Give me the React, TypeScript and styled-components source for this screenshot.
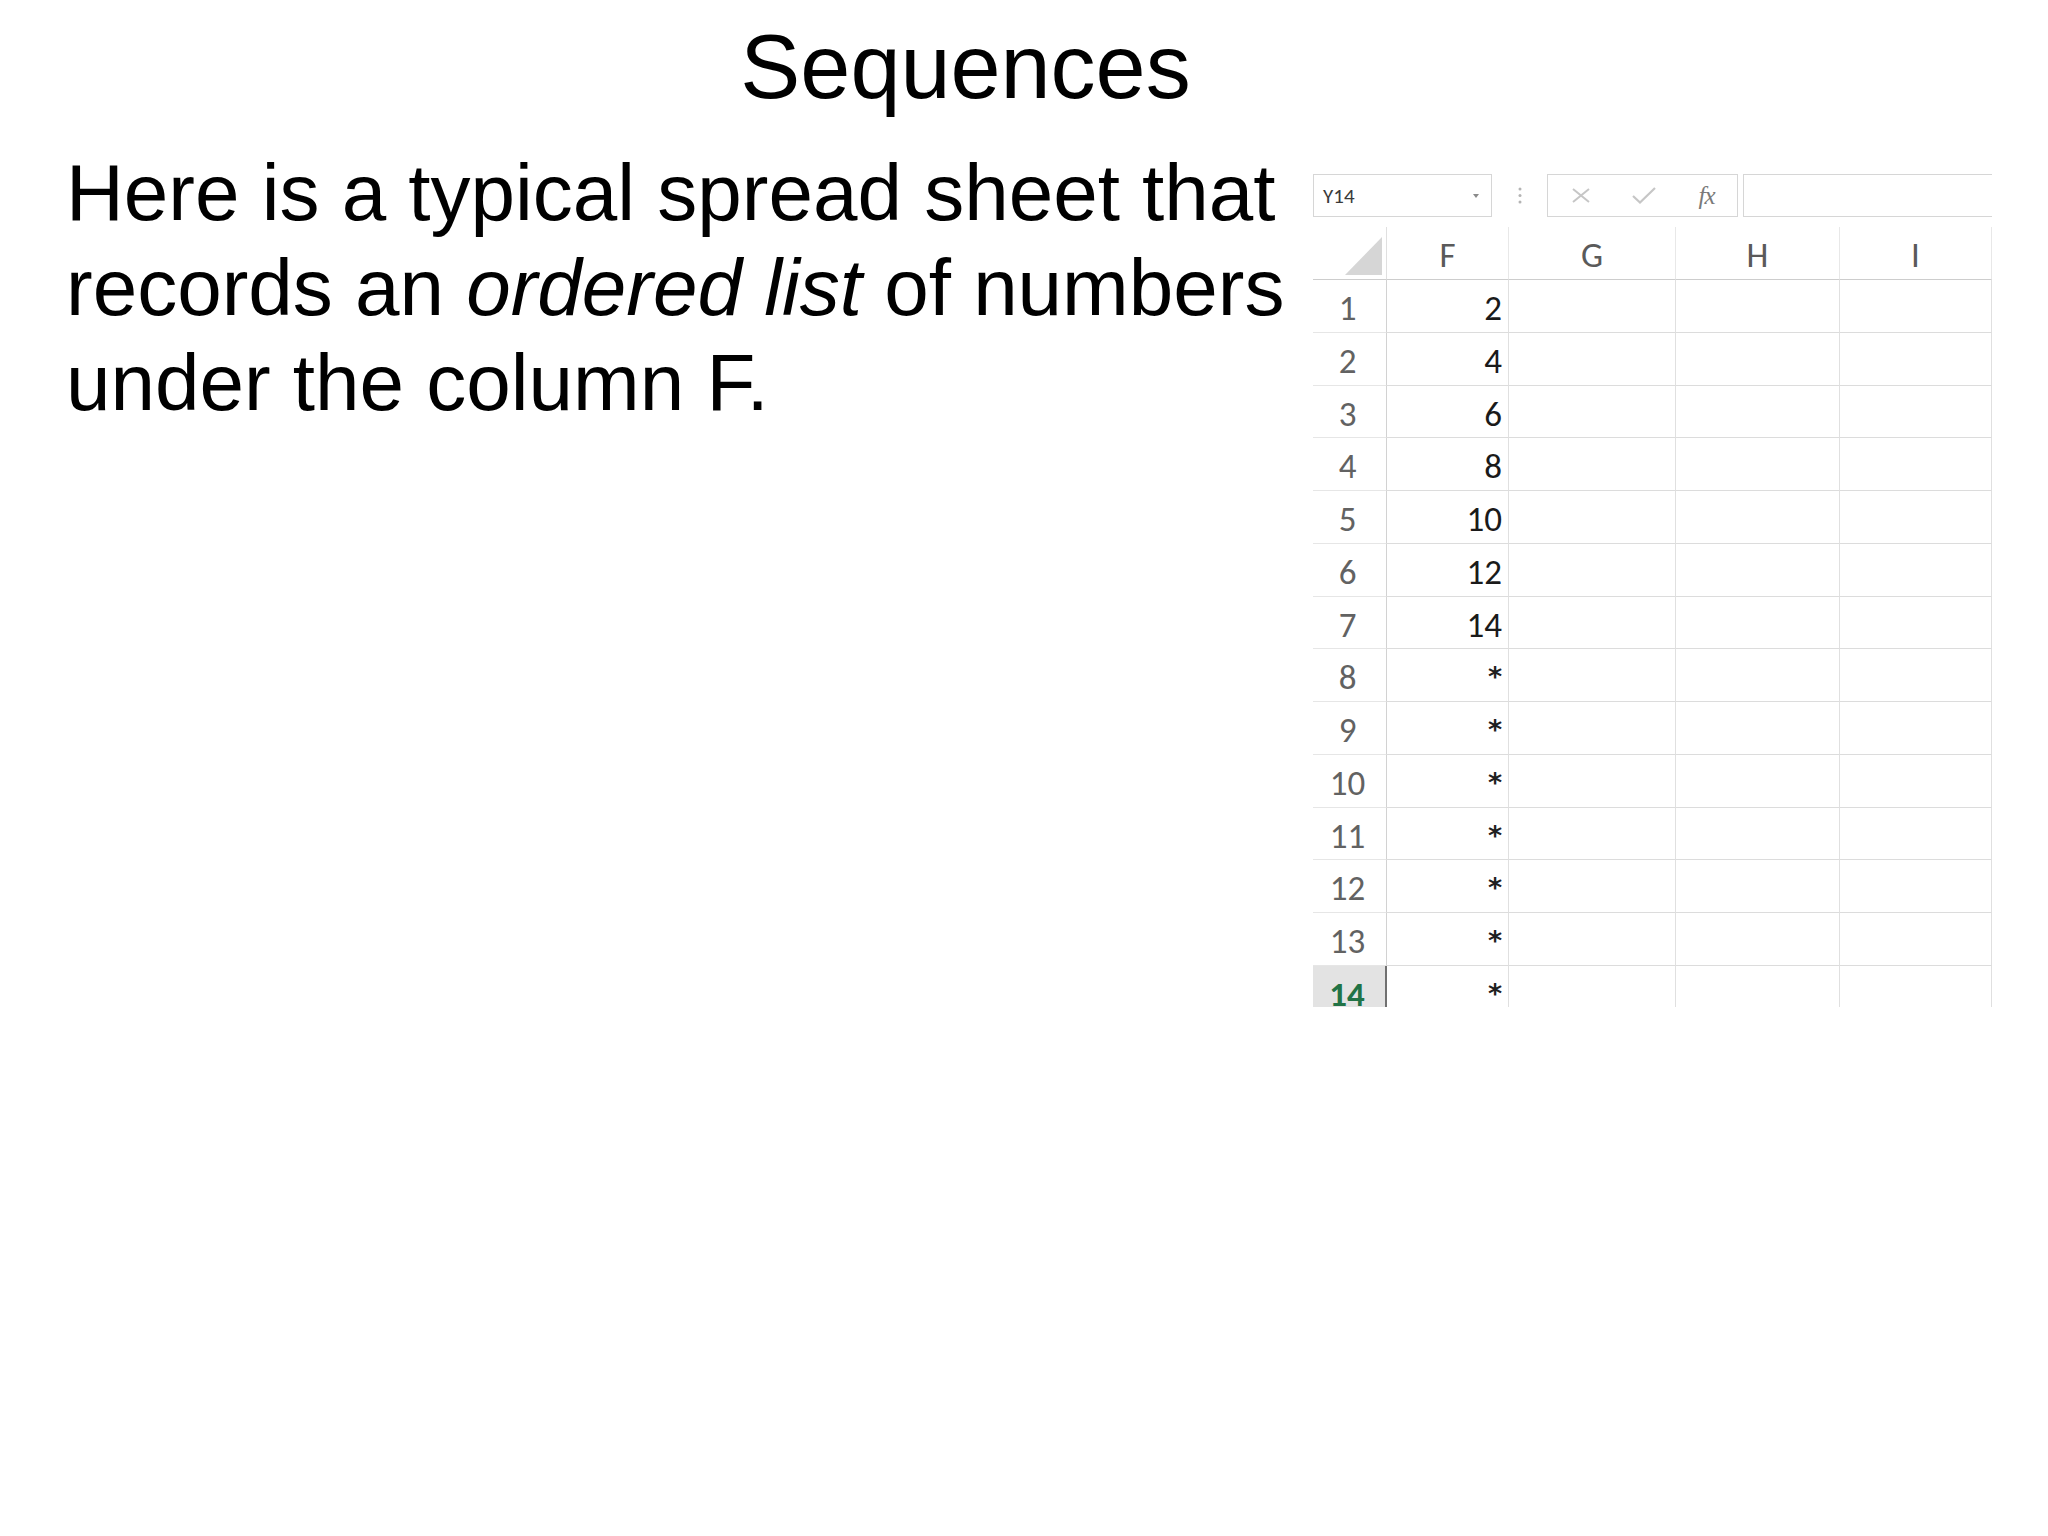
import React from "react";
import styled, { createGlobalStyle, css } from "styled-components";

const GlobalStyle = createGlobalStyle`
  html, body {
    margin: 0;
    padding: 0;
    background: #ffffff;
  }
  body {
    width: 2048px;
    height: 1536px;
    overflow: hidden;
  }
`;

const Slide = styled.div`
  width: 2048px;
  height: 1536px;
  display: flex;
  flex-direction: column;
  background: #ffffff;
  color: #000000;
  font-family: "Liberation Sans", Arial, sans-serif;
`;

const Title = styled.h1`
  margin: 0;
  padding: 16px 117px 0 0;
  text-align: center;
  font-size: 90px;
  font-weight: 400;
  line-height: 103.5px;
`;

const Content = styled.div`
  display: flex;
  align-items: flex-start;
`;

const BodyText = styled.p`
  box-sizing: border-box;
  flex: 0 0 1313px;
  width: 1313px;
  min-width: 0;
  margin: 25px 0 0 0;
  padding-left: 66px;
  font-size: 80px;
  line-height: 95px;
  white-space: nowrap;
`;

const Sheet = styled.div`
  flex: 0 0 679px;
  width: 679px;
  min-width: 0;
  margin-top: 54.5px;
  display: flex;
  flex-direction: column;
  font-family: "Carlito", "Lato", "Open Sans", sans-serif;
`;

const Toolbar = styled.div`
  display: flex;
  height: 43px;
`;

const NameBox = styled.div`
  box-sizing: border-box;
  width: 179px;
  border: 1px solid #d6d6d6;
  display: flex;
  align-items: center;
  justify-content: space-between;
  padding: 0 12px 0 9px;
  font-size: 21px;
  color: #3a3a3a;
`;

const Separator = styled.div`
  width: 55px;
  display: flex;
  align-items: center;
  justify-content: center;
`;

const FxButtons = styled.div`
  box-sizing: border-box;
  width: 191px;
  border: 1px solid #d6d6d6;
  display: grid;
  grid-template-columns: repeat(3, 63px);
  justify-items: center;
  align-items: center;
  padding-left: 1px;
`;

const FxLabel = styled.span`
  font-family: "Liberation Serif", "Times New Roman", serif;
  font-style: italic;
  font-size: 25px;
  color: #7a7a7a;
  letter-spacing: -1px;
`;

const FormulaBox = styled.div`
  flex: 1;
  margin-left: 5px;
  border: 1px solid #d6d6d6;
  border-right: none;
`;

const Grid = styled.div`
  margin-top: 10px;
  display: grid;
  grid-template-columns: 74px 122px 167px 164px 152px;
  grid-template-rows: 53px;
  grid-auto-rows: 52.75px;
  height: 780px;
  overflow: hidden;
`;

const Cell = styled.div<{ $kind: "corner" | "col" | "row" | "value" | "empty"; $selected?: boolean }>`
  box-sizing: border-box;
  border-right: 1px solid #e0e0e0;
  border-bottom: 1px solid #dcdcdc;
  font-size: 35px;
  line-height: 52px;
  white-space: nowrap;

  ${(p) =>
    p.$kind === "corner" &&
    css`
      display: flex;
      align-items: flex-end;
      justify-content: flex-end;
      padding: 0 4px 4px 0;
      border-bottom-color: #cdcdcd;
    `}

  ${(p) =>
    p.$kind === "col" &&
    css`
      text-align: center;
      color: #5a5a5a;
      padding-top: 4px;
      line-height: 48px;
      border-bottom-color: #cdcdcd;
      border-right-color: #e8e8e8;
    `}

  ${(p) =>
    p.$kind === "row" &&
    css`
      text-align: center;
      color: #626262;
      padding: 2px 4px 0 0;
      border-right-color: #d2d2d2;
      border-bottom-color: #e6e6e6;
    `}

  ${(p) =>
    p.$kind === "row" &&
    p.$selected &&
    css`
      background: #e3e3e3;
      color: #217346;
      font-weight: 700;
      border-right: 2px solid #707070;
    `}

  ${(p) =>
    p.$kind === "value" &&
    css`
      text-align: right;
      padding-right: 6px;
      padding-top: 2px;
      color: #1a1a1a;
    `}
`;

const Asterisk = styled.span`
  font-family: "DejaVu Sans", sans-serif;
  font-weight: 700;
  font-size: 27px;
  display: inline-block;
  transform: translateY(-3px);
  color: #202020;
`;

const CornerTriangle = styled.div`
  width: 37px;
  height: 38px;
  background: #d6d6d6;
  clip-path: polygon(100% 0, 100% 100%, 0 100%);
`;

const columns = ["F", "G", "H", "I"];
const values: string[] = ["2", "4", "6", "8", "10", "12", "14", "*", "*", "*", "*", "*", "*", "*"];

export default function App() {
  return (
    <>
      <GlobalStyle />
      <Slide>
        <Title>Sequences</Title>
        <Content>
          <BodyText>
            Here is a typical spread sheet that
            <br />
            records an <i>ordered list</i> of numbers
            <br />
            under the column F.
          </BodyText>
          <Sheet>
            <Toolbar>
              <NameBox>
                <span>Y14</span>
                <svg width="6" height="4" viewBox="0 0 6 4">
                  <polygon points="0,0 6,0 3,4" fill="#8a8a8a" />
                </svg>
              </NameBox>
              <Separator>
                <svg width="4" height="17" viewBox="0 0 4 17">
                  <circle cx="2" cy="2" r="1.5" fill="#b4b4b4" />
                  <circle cx="2" cy="8.5" r="1.5" fill="#b4b4b4" />
                  <circle cx="2" cy="15" r="1.5" fill="#b4b4b4" />
                </svg>
              </Separator>
              <FxButtons>
                <svg width="20" height="15" viewBox="0 0 20 15">
                  <path d="M2 1 L18 14 M18 1 L2 14" stroke="#c6c6c6" strokeWidth="2" fill="none" />
                </svg>
                <svg width="24" height="17" viewBox="0 0 24 17">
                  <path d="M1 9 L8 15.5 L23 1" stroke="#c6c6c6" strokeWidth="2.2" fill="none" />
                </svg>
                <FxLabel>fx</FxLabel>
              </FxButtons>
              <FormulaBox />
            </Toolbar>
            <Grid>
              <Cell $kind="corner">
                <CornerTriangle />
              </Cell>
              {columns.map((c) => (
                <Cell key={c} $kind="col">
                  {c}
                </Cell>
              ))}
              {values.map((v, i) => (
                <React.Fragment key={i}>
                  <Cell $kind="row" $selected={i === 13}>
                    {i + 1}
                  </Cell>
                  <Cell $kind="value">{v === "*" ? <Asterisk>*</Asterisk> : v}</Cell>
                  <Cell $kind="empty" />
                  <Cell $kind="empty" />
                  <Cell $kind="empty" />
                </React.Fragment>
              ))}
            </Grid>
          </Sheet>
        </Content>
      </Slide>
    </>
  );
}
